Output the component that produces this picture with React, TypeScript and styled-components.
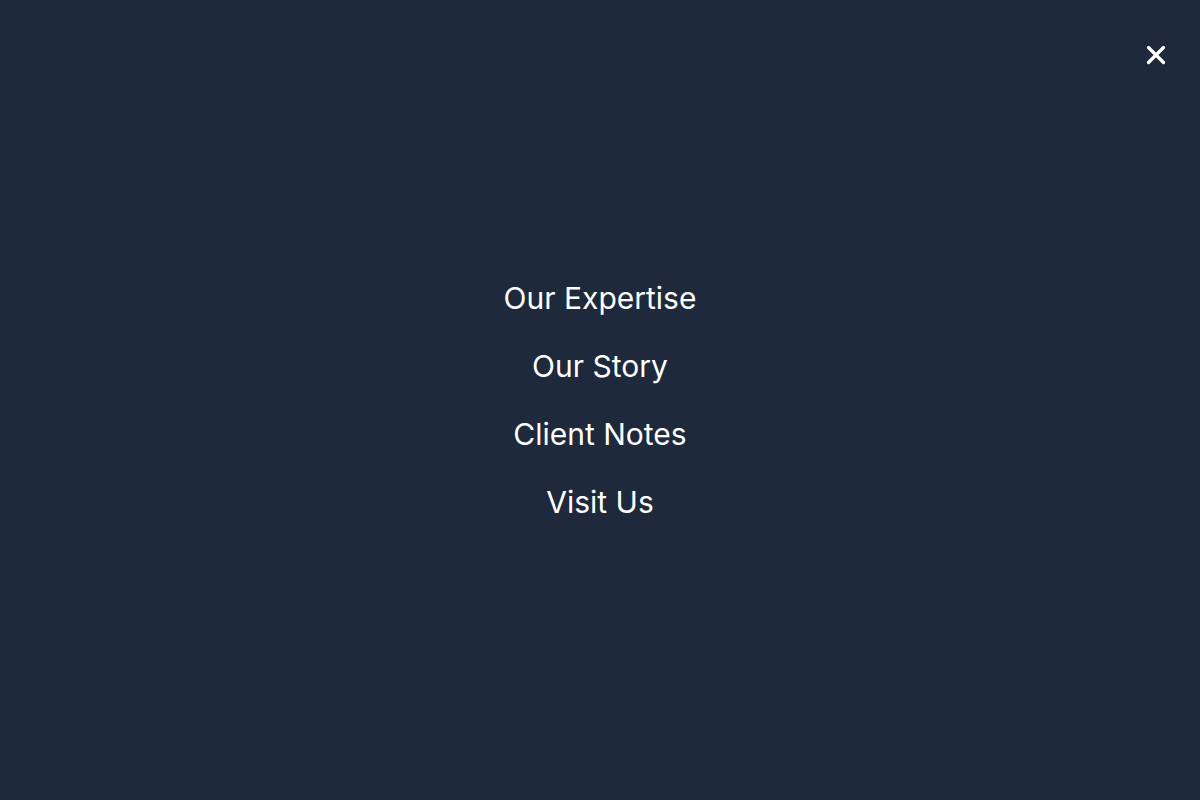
import React from 'react';
import styled, {createGlobalStyle} from 'styled-components';

const GlobalStyle = createGlobalStyle`
  html, body {
    margin: 0;
    padding: 0;
    background: #1e293b;
  }
  body {
    font-family: Inter, "Noto Sans", sans-serif;
  }
`;

const Overlay = styled.div`
  position: relative;
  display: flex;
  align-items: center;
  justify-content: center;
  width: 100vw;
  height: 100vh;
  background: #1e293b;
`;

const CloseButton = styled.button`
  position: absolute;
  top: 37px;
  right: 26px;
  display: flex;
  align-items: center;
  justify-content: center;
  width: 36px;
  height: 36px;
  padding: 0;
  background: none;
  border: none;
  color: #ffffff;
  cursor: pointer;
`;

const Nav = styled.nav`
  display: flex;
  flex-direction: column;
  align-items: center;
  gap: 32px;
`;

const NavLink = styled.a`
  font-size: 30px;
  line-height: 36px;
  color: #ffffff;
  text-decoration: none;
`;

const links = ['Our Expertise', 'Our Story', 'Client Notes', 'Visit Us'];

export default function App() {
    return (
        <>
            <GlobalStyle/>
            <Overlay>
                <CloseButton aria-label="Close menu">
                    <svg width="30" height="30" viewBox="0 0 24 24" fill="none" stroke="currentColor"
                         strokeWidth="2.6" strokeLinecap="round" strokeLinejoin="round">
                        <path d="M18 6 6 18"/>
                        <path d="m6 6 12 12"/>
                    </svg>
                </CloseButton>
                <Nav>
                    {links.map(l => (
                        <NavLink key={l} href="#">{l}</NavLink>
                    ))}
                </Nav>
            </Overlay>
        </>
    );
}
